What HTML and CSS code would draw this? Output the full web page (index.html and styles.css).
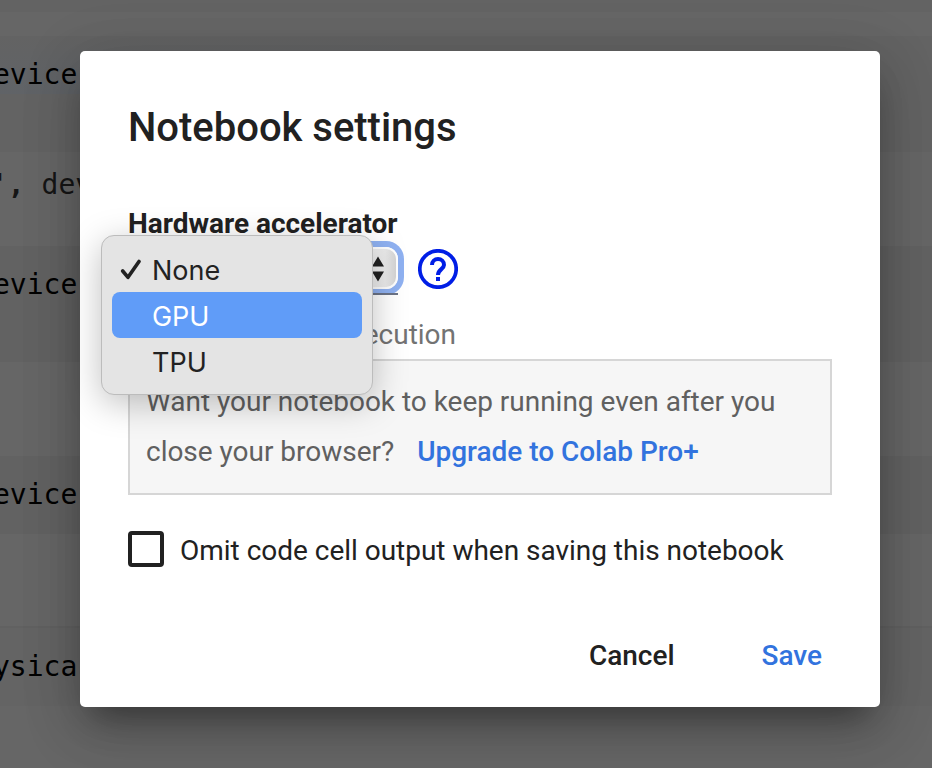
FILE: index.html
```html
<!DOCTYPE html>
<html lang="en">
<head>
<meta charset="utf-8">
<title>Notebook settings</title>
<link rel="stylesheet" href="styles.css">
</head>
<body>
<div class="app">
  <div class="notebook">
    <div class="band band-top"></div>
    <div class="band band-gap"></div>
    <div class="band band-first"><div class="selected-line"><span>evice</span></div></div>
    <div class="band band-output"><span class="quote"><b>',</b> dev</span></div>
    <div class="band band-code"><span>evice</span></div>
    <div class="band band-space"></div>
    <div class="band band-short"><span>evice</span></div>
    <div class="band band-line"></div>
    <div class="band band-last"><span>ysica</span></div>
  </div>
  <div class="dialog">
    <h1 class="title"><span>Notebook settings</span></h1>
    <div class="label"><span>Hardware accelerator</span></div>
    <div class="select-row">
      <div class="select-wrap">
        <div class="select">
          <svg width="12" height="26" viewBox="0 0 12 26"><path d="M0 10.500 6 .5l6 10zM0 15.500h12l-6 10z" fill="#212121"/></svg>
        </div>
        <div class="menu">
          <div class="option"><svg class="check" width="22" height="22" viewBox="0 0 22 22"><path d="m2.700 12 5.300 6.300L19 2.500" fill="none" stroke="#222" stroke-width="3.6" stroke-linecap="round" stroke-linejoin="round"/></svg><span>None</span></div>
          <div class="option active"><span>GPU</span></div>
          <div class="option"><span>TPU</span></div>
        </div>
      </div>
      <svg class="help" width="40" height="40" viewBox="0 0 40 40"><circle cx="20" cy="20" r="18.2" fill="none" stroke="#001ee6" stroke-width="3.7"/><path d="M14 16a6 6 0 1 1 12 0c0 4-6 4.5-6 10" fill="none" stroke="#001ee6" stroke-width="4"/><path d="M18 28h4v4h-4z" fill="#001ee6"/></svg>
    </div>
    <div class="execution"><span>ecution</span></div>
    <div class="promo">
      <div class="promo-line"><span>Want your notebook to keep running even after you</span></div>
      <div class="promo-line"><span>close your browser?</span><a class="upgrade">Upgrade to Colab Pro+</a></div>
    </div>
    <div class="omit"><div class="checkbox"></div><span>Omit code cell output when saving this notebook</span></div>
    <div class="actions"><span class="cancel">Cancel</span><span class="save">Save</span></div>
  </div>
</div>
</body>
</html>
```
FILE: styles.css
```css
* { box-sizing: border-box; }
body { margin: 0; overflow: hidden; font-family: Roboto, "Liberation Sans", sans-serif; }
.app { position: relative; width: 932px; height: 768px; background: #666; overflow: hidden; display: flex; padding: 51px 0 0 80px; align-items: flex-start; }
.notebook { position: absolute; inset: 0; font: 28px/34px "DejaVu Sans Mono", monospace; color: #000; }
.band { white-space: pre; }
.band > span, .selected-line span { display: block; margin-left: -7px; }
.band-top { height: 12px; background: #636363; }
.band-gap { height: 24px; }
.band-first { height: 116px; background: #636363; }
.selected-line { width: 400px; height: 58px; padding-top: 22px; background: linear-gradient(#636363, #606367); }
.band-output { height: 94px; padding-top: 16px; color: #151515; }
.band > .quote { margin-left: -9px; }
.band-code { height: 116px; padding-top: 22px; background: #626262; }
.band-space { height: 94px; }
.band-short { height: 78px; padding-top: 22px; background: #626262; }
.band-line { height: 94px; border-bottom: 2px solid #616161; }
.band-last { height: 78px; padding-top: 22px; background: #646464; }
.dialog { position: relative; width: 800px; height: 656px; padding: 48px; background: #fff; border-radius: 5px; color: #212121; font-size: 28px; letter-spacing: -.02px; white-space: nowrap; box-shadow: 0 22px 30px -14px rgba(0,0,0,.35), 0 24px 60px 4px rgba(0,0,0,.12), 0 9px 60px 4px rgba(0,0,0,.12); }
.title { margin: 0; height: 106px; padding-top: 1px; font-size: 40px; font-weight: 500; line-height: 56px; }
.label { height: 36px; line-height: 38px; font-weight: 700; }
.select-row { display: flex; height: 80px; }
.select-wrap { position: relative; width: 270px; margin-right: 20px; padding-top: 6px; }
.select { width: 270px; height: 42px; display: flex; align-items: center; justify-content: flex-end; padding: 1px 12px 0 0; background: linear-gradient(90deg, #f0f0f0 240px, #ececec 255px, #d0d0d0 268px); border: 2px solid #fff; border-radius: 12px; box-shadow: 0 0 0 6px #8fb1f1; }
.select::after { content: ""; position: absolute; left: 0; right: 0; top: 52px; height: 2px; background: #6b7386; }
.menu { position: absolute; z-index: 1; left: -27px; top: -6px; width: 272px; height: 160px; padding: 10px; border-radius: 13px; border: 1px solid #bcbcbc; background: #e4e4e4; box-shadow: 0 8px 34px rgba(0,0,0,.25); font: 27px/50px Inter, sans-serif; color: #222; }
.option { position: relative; height: 46px; padding-left: 40px; border-radius: 8px; }
.option.active { background: #609cf8; color: #fff; }
.check { position: absolute; left: 8px; top: 13px; }
.help { margin-top: 8px; }
.execution { width: 328px; height: 38px; margin-top: -6px; line-height: 40px; color: #737373; text-align: right; }
.promo { height: 136px; margin-top: 6px; border: 2px solid #d6d6d6; background: #f6f6f6; padding: 16px; color: #606060; }
.promo-line { height: 50px; line-height: 50px; display: flex; }
.upgrade { margin-left: 23px; color: #3273de; font-weight: 500; }
.omit { display: flex; align-items: center; height: 38px; margin-top: 35px; gap: 16px; }
.omit span { padding-top: 2px; }
.checkbox { width: 36px; height: 36px; border: 4px solid #212121; border-radius: 4px; }
.actions { display: flex; justify-content: flex-end; gap: 87px; height: 40px; margin-top: 68px; padding-right: 10px; line-height: 40px; font-weight: 500; }
.save { color: #3273de; }
```
